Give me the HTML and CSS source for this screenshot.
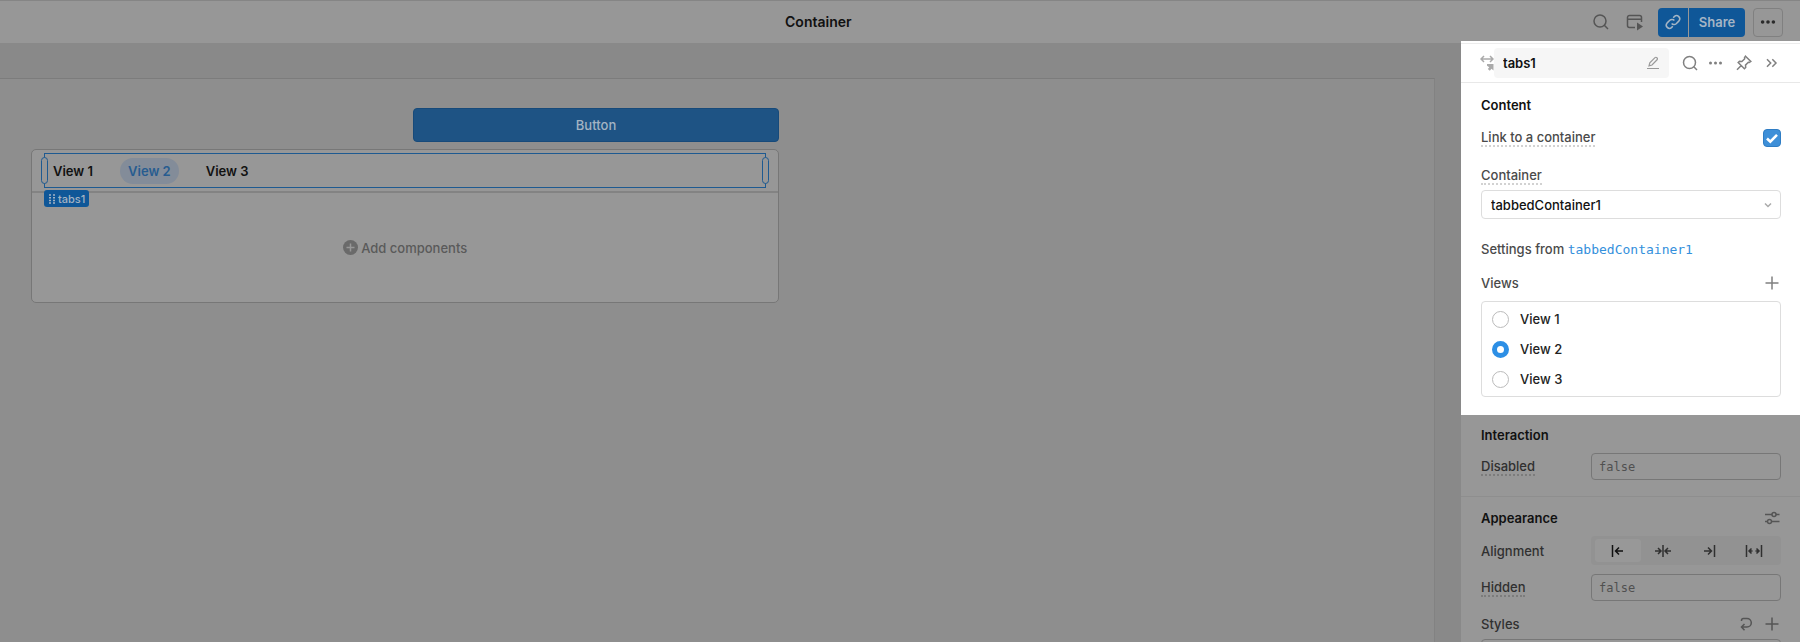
FILE: index.html
```html
<!DOCTYPE html>
<html lang="en">
  <head>
    <meta charset="UTF-8" />
    <meta name="viewport" content="width=device-width, initial-scale=1.0" />
    <title>Container</title>
    <link rel="stylesheet" href="styles.css">
  </head>
  <body>
    <!-- Top bar -->
    <header class="topbar">
      <h1 class="page-title">Container</h1>
      <div class="topbar-actions">
        <button class="icon-btn" aria-label="Search">
          <svg width="18" height="18" viewBox="0 0 18 18"><circle cx="8" cy="8" r="6" /><path d="M12.3 12.3L16 16" /></svg>
        </button>
        <button class="icon-btn" aria-label="Preview">
          <svg width="18" height="18" viewBox="0 0 18 18"><path d="M9 14.5H3.5a2 2 0 0 1-2-2v-8a2 2 0 0 1 2-2h10a2 2 0 0 1 2 2V9M1.5 6.3h14" /><path class="solid" d="M11 9.5l6 4-6 4z" /></svg>
        </button>
        <div class="share">
          <button class="share-link" aria-label="Copy link">
            <svg width="18" height="18" viewBox="0 0 18 18"><path d="M7.6 10.5a3.2 3.2 0 0 0 4.6.2l2.8-2.8a3.2 3.2 0 0 0-4.5-4.5L9.2 4.7M10.4 7.5a3.2 3.2 0 0 0-4.6-.2L3 10.1a3.2 3.2 0 0 0 4.5 4.5l1.3-1.3" /></svg>
          </button>
          <button class="share-main">Share</button>
        </div>
        <button class="more-btn" aria-label="More">
          <svg width="16" height="16" viewBox="0 0 16 16"><g class="solid"><circle cx="2.6" cy="8" r="1.8" /><circle cx="8" cy="8" r="1.8" /><circle cx="13.4" cy="8" r="1.8" /></g></svg>
        </button>
      </div>
    </header>

    <div class="editor">
      <!-- Canvas -->
      <main class="workspace">
        <div class="canvas">
          <div class="components">
            <button class="app-button">Button</button>
            <section class="tabbed-container">
              <div class="container-header">
                <div class="tabs" role="tablist">
                  <span class="handle handle-left"></span>
                  <button class="tab" role="tab">View 1</button>
                  <button class="tab active" role="tab" aria-selected="true">View 2</button>
                  <button class="tab" role="tab">View 3</button>
                  <span class="handle handle-right"></span>
                  <span class="tag">
                    <svg width="6" height="10" viewBox="0 0 6 10"><path d="M0 1h2M4 1h2M0 3.7h2M4 3.7h2M0 6.4h2M4 6.4h2M0 9.1h2M4 9.1h2" /></svg>
                    tabs1
                  </span>
                </div>
              </div>
              <div class="container-body">
                <svg width="15" height="15" viewBox="0 0 15 15"><circle class="solid" cx="7.5" cy="7.5" r="7.5" /><path class="plus" d="M7.5 3.5v8M3.5 7.5h8" /></svg>
                <span>Add components</span>
              </div>
            </section>
          </div>
        </div>
      </main>

      <!-- Inspector -->
      <aside class="inspector">
        <div class="highlight">
          <div class="inspector-head">
            <svg class="type-icon" width="14" height="18" viewBox="0 0 14 18"><path d="M1 5h12M4 2L1 5l3 3M10 2l3 3-3 3" /><path class="solid" d="M7 10h6.5v6.500l-2-1.700-1.700 2-2-1.700 1.500-1.800L7 11.800z" /></svg>
            <div class="name-box">
              <input class="name-input" type="text" value="tabs1" aria-label="Component name" />
              <button class="icon-btn edit" aria-label="Rename">
                <svg width="14" height="14" viewBox="0 0 14 14"><path d="M3 9.8l.8-3L9 1.6a1.2 1.2 0 0 1 1.7 0l.4.4a1.2 1.2 0 0 1 0 1.7L6 9zM1 12.5h12" /></svg>
              </button>
            </div>
            <div class="head-actions">
              <button class="icon-btn" aria-label="Search properties">
                <svg width="18" height="18" viewBox="0 0 18 18"><circle cx="8.5" cy="8.5" r="6" /><path d="M12.8 12.8L16 16" /></svg>
              </button>
              <button class="icon-btn" aria-label="More options">
                <svg width="18" height="18" viewBox="0 0 18 18"><g class="solid"><circle cx="2.5" cy="9" r="1.5" /><circle cx="7.5" cy="9" r="1.5" /><circle cx="12.5" cy="9" r="1.5" /></g></svg>
              </button>
              <button class="icon-btn" aria-label="Pin">
                <svg width="18" height="18" viewBox="0 0 18 18"><path d="M10.5 2.2l5.3 5.3-1.5 1-1-.2-2.8 2.8.2 2.4-1.3 1.3-6.2-6.2 1.3-1.3 2.4.2 2.8-2.8-.2-1zM6 11.7L2 15.7" /></svg>
              </button>
              <button class="icon-btn" aria-label="Collapse">
                <svg width="18" height="18" viewBox="0 0 18 18"><path d="M5 5.200L8.700 9 5 12.800M10.300 5.200L14 9l-3.700 3.800" /></svg>
              </button>
            </div>
          </div>

          <section class="content">
            <h2>Content</h2>
            <div class="row link-row">
              <label class="hint" for="linkContainer">Link to a container</label>
              <input class="checkbox" type="checkbox" id="linkContainer" checked />
            </div>
            <div class="field">
              <label class="hint" for="container">Container</label>
              <div class="select-wrap">
                <select id="container">
                  <option>tabbedContainer1</option>
                </select>
                <svg class="chevron" width="10" height="10" viewBox="0 0 10 10"><path d="M2 3.5l3 3 3-3" /></svg>
              </div>
            </div>
            <p class="settings">Settings from <a href="#container">tabbedContainer1</a></p>
            <div class="row views-row">
              <span>Views</span>
              <button class="icon-btn" aria-label="Add view">
                <svg width="18" height="18" viewBox="0 0 18 18"><path d="M9 2.5v13M2.5 9h13" /></svg>
              </button>
            </div>
            <div class="views">
              <label class="view"><input type="radio" name="view" />View 1</label>
              <label class="view"><input type="radio" name="view" checked />View 2</label>
              <label class="view"><input type="radio" name="view" />View 3</label>
            </div>
          </section>
        </div>

        <section class="dimmed interaction">
          <h2>Interaction</h2>
          <div class="row">
            <label class="hint" for="disabled">Disabled</label>
            <input class="code-input" id="disabled" type="text" placeholder="false" />
          </div>
        </section>

        <section class="dimmed appearance">
          <div class="row">
            <h2>Appearance</h2>
            <button class="icon-btn" aria-label="Adjust appearance">
              <svg width="18" height="18" viewBox="0 0 18 18"><path d="M2 5.5h7M13 5.5h3.5M2 12.5h2.5M8.5 12.5h8" /><circle cx="11" cy="5.5" r="2" /><circle cx="6.5" cy="12.5" r="2" /></svg>
            </button>
          </div>
          <div class="row">
            <span>Alignment</span>
            <div class="segmented" role="group" aria-label="Alignment">
              <button class="active" aria-label="Left">
                <svg width="18" height="14" viewBox="0 0 18 14"><path d="M3.5 1v12M14 7H6.5M10 3.5L6.5 7l3.5 3.5" /></svg>
              </button>
              <button aria-label="Center">
                <svg width="18" height="14" viewBox="0 0 18 14"><path d="M9 1v12M1 7h5.5M4 4l3 3-3 3M17 7h-5.5M14 4l-3 3 3 3" /></svg>
              </button>
              <button aria-label="Right">
                <svg width="18" height="14" viewBox="0 0 18 14"><path d="M14.5 1v12M4 7h7.5M8 3.5L11.5 7 8 10.5" /></svg>
              </button>
              <button aria-label="Stretch">
                <svg width="18" height="14" viewBox="0 0 18 14"><path d="M1.5 1v12M16.5 1v12M4 7h3.5M6.5 4.5L4 7l2.5 2.5M14 7h-3.5M11.5 4.5L14 7l-2.5 2.5" /></svg>
              </button>
            </div>
          </div>
          <div class="row">
            <label class="hint" for="hidden">Hidden</label>
            <input class="code-input" id="hidden" type="text" placeholder="false" />
          </div>
          <div class="row styles-row">
            <span>Styles</span>
            <div class="style-actions">
              <button class="icon-btn" aria-label="Reset styles">
                <svg width="18" height="18" viewBox="0 0 18 18"><path d="M4.500 6V5.500a2 2 0 0 1 2-2H10a4.300 4.300 0 0 1 0 8.600H4.500M7.500 9l-3 3.100 3 3.100" /></svg>
              </button>
              <button class="icon-btn" aria-label="Add style">
                <svg width="18" height="18" viewBox="0 0 18 18"><path d="M9 2.5v13M2.5 9h13" /></svg>
              </button>
            </div>
          </div>
          <div class="styles-list"></div>
        </section>
      </aside>
    </div>
  </body>
</html>
```
FILE: styles.css
```css
* {
  box-sizing: border-box;
}

body {
  margin: 0;
  height: 100vh;
  display: flex;
  flex-direction: column;
  overflow: hidden;
  font-family: Inter, sans-serif;
  font-size: 13px;
  font-weight: 500;
  line-height: 18px;
  color: #4a4a4a;
  background: #8e8e8e;
}

h1,
h2,
p {
  margin: 0;
}

button,
input,
select {
  font: inherit;
  color: inherit;
  margin: 0;
  padding: 0;
  border: none;
  background: none;
}

svg {
  display: block;
  flex: none;
  fill: none;
  stroke: currentColor;
  stroke-width: 1.5;
}

.solid {
  fill: currentColor;
  stroke: none;
}

.icon-btn {
  display: flex;
  color: #808080;
}

/* Top bar */
.topbar {
  display: grid;
  grid-template-columns: 14fr auto 17fr;
  align-items: center;
  height: 43px;
  padding: 0 17px 0 18px;
  background: #979797;
  border-top: 1px solid #858585;
  flex: none;
}

.page-title {
  grid-column: 2;
  font-size: 14px;
  font-weight: 600;
  color: #111;
}

.topbar-actions {
  display: flex;
  justify-content: flex-end;
  align-items: center;
  gap: 16px;
}

.topbar .icon-btn {
  color: #555;
}

.share {
  display: flex;
  gap: 1px;
  height: 29px;
  margin-left: -2px;
}

.share button {
  display: flex;
  align-items: center;
  justify-content: center;
  background: #0f5798;
  color: #a5b5c5;
}

.share .share-link {
  width: 30px;
  border-radius: 4px 0 0 4px;
}

.share .share-main {
  width: 56px;
  font-weight: 600;
  border-radius: 0 4px 4px 0;
}

.more-btn {
  display: flex;
  align-items: center;
  justify-content: center;
  width: 30px;
  height: 29px;
  margin-left: -8px;
  border: 1px solid #808080;
  border-radius: 4px;
  color: #2b2b2b;
}

.editor {
  flex: 1;
  display: flex;
  min-height: 0;
}

/* Canvas */
.workspace {
  flex: 1;
  padding: 35px 26px 0 0;
  background: #898989;
}

.canvas {
  display: grid;
  grid-template-columns: 6fr 5fr;
  height: 100%;
  padding: 29px 31px;
  background: #8e8e8e;
  border-top: 1px solid #7c7c7c;
  border-right: 1px solid #828282;
}

.components {
  display: flex;
  flex-direction: column;
  gap: 7px;
}

.app-button {
  align-self: flex-end;
  width: 49%;
  height: 34px;
  background: #1e5384;
  border: 1px solid #174a7a;
  border-radius: 4px;
  color: #a3b3c3;
}

.tabbed-container {
  background: #979797;
  border: 1px solid #777;
  border-radius: 5px;
}

.container-header {
  padding: 3px 12px;
  border-bottom: 2px solid #838383;
}

.tabs {
  position: relative;
  display: flex;
  align-items: center;
  gap: 19px;
  height: 35px;
  border: 1px solid #1e5a91;
}

.tab {
  height: 26px;
  padding: 0 8px;
  border-radius: 13px;
  font-weight: 600;
  color: #111;
}

.tab.active {
  background: #838c99;
  color: #275c90;
}

.handle {
  position: absolute;
  top: 3px;
  width: 7px;
  height: 27px;
  border: 1px solid #1e5a91;
  border-radius: 4px;
  background: #979797;
}

.handle-left {
  left: -4px;
}

.handle-right {
  right: -4px;
}

.tag {
  position: absolute;
  left: -1px;
  top: 36px;
  display: flex;
  align-items: center;
  gap: 3px;
  height: 17px;
  padding: 0 4px 0 5px;
  border-radius: 3px;
  background: #0f5798;
  color: #a3b3c3;
  font-size: 11px;
}

.container-body {
  display: flex;
  align-items: center;
  justify-content: center;
  gap: 3px;
  height: 109px;
  color: #5a5a5a;
}

.container-body .solid {
  fill: #6a6a6a;
}

.plus {
  stroke: #979797;
}

/* Inspector */
.inspector {
  width: 339px;
  flex: none;
  background: #979797;
}

.highlight {
  margin-top: -2px;
  padding-top: 2px;
  position: relative;
  background: #fff;
}

.inspector-head {
  display: flex;
  align-items: center;
  height: 40px;
  padding: 0 20px 0 19px;
  border-top: 1px solid #ececec;
  border-bottom: 1px solid #e8e8e8;
}

.type-icon {
  color: #aaa;
}

.name-box {
  flex: 1;
  min-width: 0;
  display: flex;
  align-items: center;
  height: 30px;
  padding: 0 9px;
  background: #f6f6f6;
  border-radius: 4px;
}

.name-input {
  flex: 1;
  min-width: 0;
  font-weight: 600;
  color: #111;
}

.edit {
  color: #999;
}

.edit svg {
  stroke-width: 1.2;
}

.head-actions {
  display: flex;
  gap: 9px;
  padding-left: 12px;
}

.content {
  display: flex;
  flex-direction: column;
  padding: 13px 19px 18px 20px;
}

h2 {
  font-size: 13px;
  font-weight: 600;
  line-height: 18px;
  color: #111;
}

.row {
  display: flex;
  align-items: center;
  justify-content: space-between;
}

.hint {
  line-height: 16px;
  border-bottom: 2px dotted #d2d2d2;
}

.link-row {
  margin-top: 15px;
}

.checkbox {
  appearance: none;
  width: 18px;
  height: 18px;
  border: 1px solid #2f7dc4;
  border-radius: 4px;
  background: #3e8fd8 url("data:image/svg+xml,%3Csvg xmlns='http://www.w3.org/2000/svg' viewBox='0 0 16 16'%3E%3Cpath d='M3 8.5l3.3 3.2L13 4.8' fill='none' stroke='white' stroke-width='2.6'/%3E%3C/svg%3E") center / 16px no-repeat;
}

.field {
  display: flex;
  flex-direction: column;
  align-items: flex-start;
  gap: 5px;
  margin-top: 20px;
}

.select-wrap {
  position: relative;
  width: 100%;
}

.select-wrap select {
  appearance: none;
  display: block;
  width: 100%;
  height: 29px;
  padding: 0 9px;
  border: 1px solid #ddd;
  border-radius: 4px;
  color: #111;
}

.chevron {
  position: absolute;
  right: 8px;
  top: 10px;
  color: #aaa;
}

.settings {
  margin-top: 21px;
}

.settings a {
  font-family: "DejaVu Sans Mono", monospace;
  line-height: 16px;
  color: #3490dc;
  text-decoration: none;
}

.views-row {
  margin-top: 16px;
}

.views {
  display: flex;
  flex-direction: column;
  gap: 12px;
  margin-top: 9px;
  padding: 8px 10px;
  border: 1px solid #ddd;
  border-radius: 4px;
  color: #222;
}

.view {
  display: flex;
  align-items: center;
  gap: 11px;
}

.view input {
  appearance: none;
  width: 17px;
  height: 17px;
  border: 1px solid #bbb;
  border-radius: 50%;
}

.view input:checked {
  border: 5px solid #2d8fe5;
}

/* Sections below the highlighted area */
.dimmed {
  padding: 0 19px 0 20px;
  color: #303030;
}

.dimmed .icon-btn {
  color: #555;
}

.dimmed .hint {
  border-color: #7c7c7c;
}

.interaction {
  display: flex;
  flex-direction: column;
  gap: 9px;
  padding-top: 11px;
  padding-bottom: 16px;
  border-bottom: 1px solid #8e8e8e;
}

.code-input {
  width: 190px;
  height: 27px;
  padding: 0 7px;
  border: 1px solid #777;
  border-radius: 4px;
  font-family: "DejaVu Sans Mono", monospace;
  font-size: 12px;
}

.code-input::placeholder {
  color: #505050;
}

.appearance {
  padding-top: 12px;
}

.appearance .row + .row {
  margin-top: 9px;
}

.segmented {
  display: flex;
  width: 190px;
  height: 29px;
  padding: 3px 4px;
  border-radius: 4px;
  background: #929292;
}

.segmented button {
  flex: 1;
  display: flex;
  align-items: center;
  justify-content: center;
  border-radius: 3px;
}

.segmented .active {
  background: #989898;
  color: #111;
}

.style-actions {
  display: flex;
  gap: 8px;
}

/* needs the extra .row to win over the general row spacing */
.appearance .row + .styles-row {
  margin-top: 14px;
}

.styles-list {
  height: 30px;
  margin-top: 6px;
  border: 1px solid #777;
  border-radius: 4px;
}
```
